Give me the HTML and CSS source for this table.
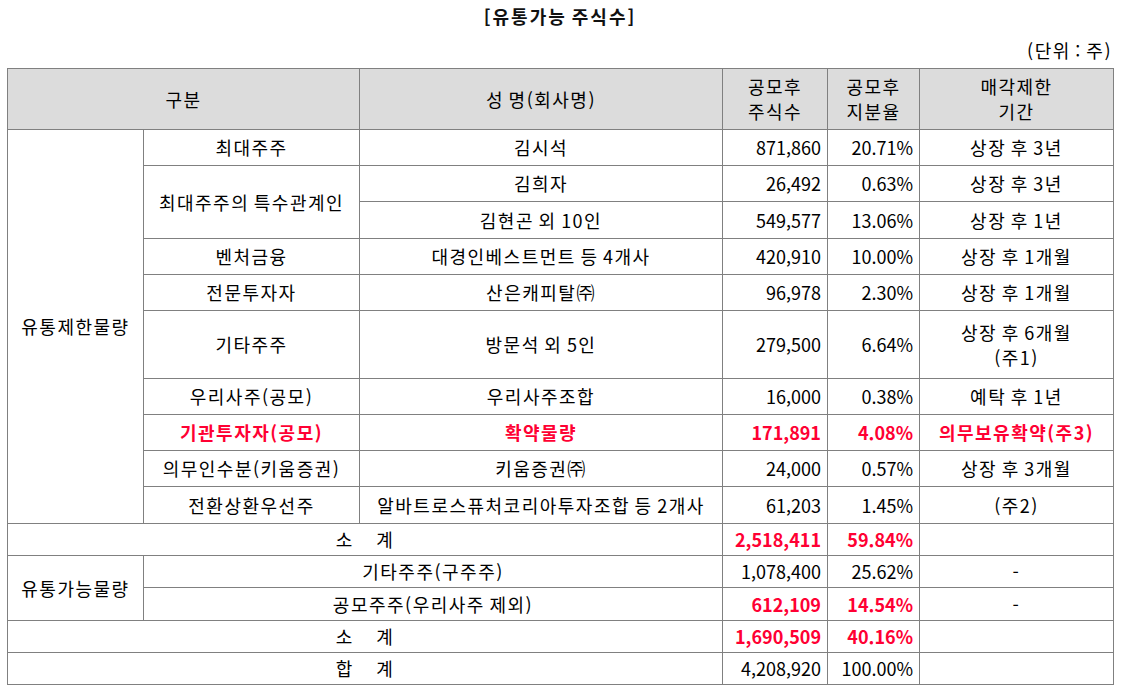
FILE: index.html
```html
<!DOCTYPE html>
<html lang="ko">
<head>
<meta charset="utf-8">
<title>유통가능 주식수</title>
<link rel="stylesheet" href="styles.css">
</head>
<body>
<div class="wrap">
  <div class="title">[유통가능 주식수]</div>
  <div class="unit">(단위 : 주)</div>
  <table class="tbl">
    <colgroup>
      <col class="c1"><col class="c2"><col class="c3"><col class="c4"><col class="c5"><col class="c6">
    </colgroup>
    <thead>
      <tr class="h61">
        <th colspan="2">구분</th>
        <th>성 명(회사명)</th>
        <th>공모후<br>주식수</th>
        <th>공모후<br>지분율</th>
        <th>매각제한<br>기간</th>
      </tr>
    </thead>
    <tbody>
      <tr class="h36">
        <td rowspan="10">유통제한물량</td>
        <td>최대주주</td>
        <td>김시석</td>
        <td class="num">871,860</td>
        <td class="num">20.71%</td>
        <td>상장 후 3년</td>
      </tr>
      <tr class="h36">
        <td rowspan="2">최대주주의 특수관계인</td>
        <td>김희자</td>
        <td class="num">26,492</td>
        <td class="num">0.63%</td>
        <td>상장 후 3년</td>
      </tr>
      <tr class="h37">
        <td>김현곤 외 10인</td>
        <td class="num">549,577</td>
        <td class="num">13.06%</td>
        <td>상장 후 1년</td>
      </tr>
      <tr class="h36">
        <td>벤처금융</td>
        <td>대경인베스트먼트 등 4개사</td>
        <td class="num">420,910</td>
        <td class="num">10.00%</td>
        <td>상장 후 1개월</td>
      </tr>
      <tr class="h36">
        <td>전문투자자</td>
        <td>산은캐피탈㈜</td>
        <td class="num">96,978</td>
        <td class="num">2.30%</td>
        <td>상장 후 1개월</td>
      </tr>
      <tr class="h68">
        <td>기타주주</td>
        <td>방문석 외 5인</td>
        <td class="num">279,500</td>
        <td class="num">6.64%</td>
        <td>상장 후 6개월<br>(주1)</td>
      </tr>
      <tr class="h36">
        <td>우리사주(공모)</td>
        <td>우리사주조합</td>
        <td class="num">16,000</td>
        <td class="num">0.38%</td>
        <td>예탁 후 1년</td>
      </tr>
      <tr class="h36 red">
        <td>기관투자자(공모)</td>
        <td>확약물량</td>
        <td class="num">171,891</td>
        <td class="num">4.08%</td>
        <td>의무보유확약(주3)</td>
      </tr>
      <tr class="h36">
        <td>의무인수분(키움증권)</td>
        <td>키움증권㈜</td>
        <td class="num">24,000</td>
        <td class="num">0.57%</td>
        <td>상장 후 3개월</td>
      </tr>
      <tr class="h37">
        <td>전환상환우선주</td>
        <td>알바트로스퓨처코리아투자조합 등 2개사</td>
        <td class="num">61,203</td>
        <td class="num">1.45%</td>
        <td>(주2)</td>
      </tr>
      <tr class="h32">
        <td colspan="3" class="spaced">소 계</td>
        <td class="num red">2,518,411</td>
        <td class="num red">59.84%</td>
        <td></td>
      </tr>
      <tr class="h32">
        <td rowspan="2">유통가능물량</td>
        <td colspan="2">기타주주(구주주)</td>
        <td class="num">1,078,400</td>
        <td class="num">25.62%</td>
        <td>-</td>
      </tr>
      <tr class="h33">
        <td colspan="2">공모주주(우리사주 제외)</td>
        <td class="num red">612,109</td>
        <td class="num red">14.54%</td>
        <td>-</td>
      </tr>
      <tr class="h32">
        <td colspan="3" class="spaced">소 계</td>
        <td class="num red">1,690,509</td>
        <td class="num red">40.16%</td>
        <td></td>
      </tr>
      <tr class="h32">
        <td colspan="3" class="spaced">합 계</td>
        <td class="num">4,208,920</td>
        <td class="num">100.00%</td>
        <td></td>
      </tr>
    </tbody>
  </table>
</div>
</body>
</html>
```
FILE: styles.css
```css
html, body {
  margin: 0;
  padding: 0;
  background: #ffffff;
}

body {
  font-family: "Noto Sans CJK KR", "Noto Sans", "Liberation Sans", sans-serif;
  font-size: 18px;
  letter-spacing: 1.5px;
  word-spacing: -2px;
  color: #000000;
}

.wrap {
  width: 1106px;
  margin-left: 7px;
}

.title {
  height: 33px;
  line-height: 33px;
  text-align: center;
  font-weight: bold;
  color: #111111;
  letter-spacing: 2px;
}

.unit {
  height: 35px;
  line-height: 35px;
  text-align: right;
  padding-right: 1px;
}

.tbl {
  width: 1106px;
  table-layout: fixed;
  border-collapse: collapse;
  border: 1px solid #000000;
}

.c1 { width: 136px; }
.c2 { width: 216px; }
.c3 { width: 363px; }
.c4 { width: 105px; }
.c5 { width: 92px; }
.c6 { width: 194px; }

.tbl th,
.tbl td {
  border: 1px solid #808080;
  padding: 0 4px;
  text-align: center;
  vertical-align: middle;
  line-height: 25px;
  white-space: nowrap;
  overflow: hidden;
}

.tbl th {
  background: #dcdcdc;
  font-weight: normal;
}

.tbl td.num {
  text-align: right;
  padding-right: 6px;
  letter-spacing: 0;
  word-spacing: 0;
}

.tbl .red,
.tbl .red td {
  color: #ff0033;
  font-weight: bold;
}

.tbl td.spaced {
  word-spacing: 16px;
}

.h61 { height: 61px; }
.h36 { height: 36px; }
.h37 { height: 37px; }
.h68 { height: 68px; }
.h32 { height: 32px; }
.h33 { height: 33px; }
```
